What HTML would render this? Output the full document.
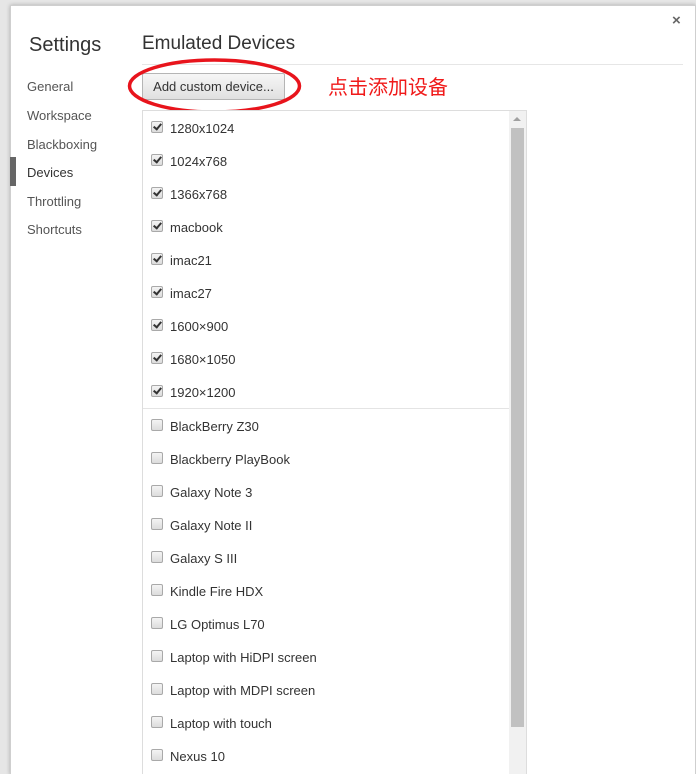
<!DOCTYPE html>
<html><head><meta charset="utf-8"><style>
html,body{margin:0;padding:0;width:696px;height:774px;overflow:hidden;background:#e6e6e6;font-family:"Segoe UI","Liberation Sans","Noto Sans CJK SC",sans-serif;position:relative;}
.dlg{position:absolute;left:10px;top:5px;width:684px;height:769px;background:#fff;border:1px solid #cfcfcf;border-bottom:0;box-shadow:0 0 4px rgba(0,0,0,.25);}
.a{position:absolute;white-space:nowrap;}
.side{font-size:13px;color:#555;left:27px;}
.cb{position:absolute;left:151px;width:10px;height:10px;border:1px solid #a9a9a9;border-radius:2px;background:linear-gradient(#f4f4f4,#dcdcdc);}
.cb.c::after{content:"";position:absolute;left:3px;top:0px;width:3px;height:6px;border:solid #333;border-width:0 2px 2px 0;transform:rotate(40deg);}
.lbl{position:absolute;left:170px;font-size:13px;color:#333;}
</style></head><body>
<div class="dlg"></div>
<div class="a" style="left:29px;top:34px;font-size:20px;color:#333;">Settings</div>
<div class="a" style="left:142px;top:33px;font-size:19px;color:#333;">Emulated Devices</div>
<div class="a" style="left:672px;top:12px;font-size:15px;color:#666;font-weight:bold;">×</div>
<div class="a" style="left:142px;top:64px;width:541px;height:1px;background:#e6e6e6;"></div>
<div class="a side" style="top:79px;">General</div>
<div class="a side" style="top:108px;">Workspace</div>
<div class="a side" style="top:137px;">Blackboxing</div>
<div class="a" style="left:10px;top:157px;width:6px;height:29px;background:#666;"></div>
<div class="a side" style="top:165px;color:#333;">Devices</div>
<div class="a side" style="top:194px;">Throttling</div>
<div class="a side" style="top:222px;">Shortcuts</div>
<div class="a" style="left:142px;top:73px;width:141px;height:25px;border:1px solid #b5b5b5;border-radius:2px;background:linear-gradient(#f6f6f6,#e0e0e0);font-size:13px;color:#333;text-align:center;line-height:25px;">Add custom device...</div>
<svg class="a" style="left:0;top:0" width="696" height="774"><ellipse cx="214.5" cy="86" rx="85" ry="26" fill="none" stroke="#e8141c" stroke-width="3.5"/></svg>
<div class="a" style="left:328px;top:71px;font-size:20px;color:#f01a1a;font-family:'Noto Sans CJK SC',sans-serif;">点击添加设备</div>
<div class="a" style="left:142px;top:110px;width:383px;height:670px;border:1px solid #ddd;background:#fff;"></div>
<div class="a" style="left:509px;top:111px;width:17px;height:663px;background:#f1f1f1;"></div>
<div class="a" style="left:513px;top:117px;width:0;height:0;border:4px solid transparent;border-bottom:4px solid #a0a0a0;border-top:0;"></div>
<div class="a" style="left:511px;top:128px;width:13px;height:599px;background:#c1c1c1;"></div>
<div class="a" style="left:143px;top:408px;width:366px;height:1px;background:#e4e4e4;"></div>
<div id="list"></div>
<script>
var c=["1280x1024","1024x768","1366x768","macbook","imac21","imac27","1600×900","1680×1050","1920×1200"];
var u=["BlackBerry Z30","Blackberry PlayBook","Galaxy Note 3","Galaxy Note II","Galaxy S III","Kindle Fire HDX","LG Optimus L70","Laptop with HiDPI screen","Laptop with MDPI screen","Laptop with touch","Nexus 10"];
var h="";
c.forEach(function(t,i){var y=128+33*i;h+='<div class="cb c" style="top:'+(y-7)+'px"></div><div class="lbl" style="top:'+(y-7)+'px">'+t+'</div>';});
u.forEach(function(t,i){var y=426+33*i;h+='<div class="cb" style="top:'+(y-7)+'px"></div><div class="lbl" style="top:'+(y-7)+'px">'+t+'</div>';});
document.getElementById("list").innerHTML=h;
</script>
</body></html>
